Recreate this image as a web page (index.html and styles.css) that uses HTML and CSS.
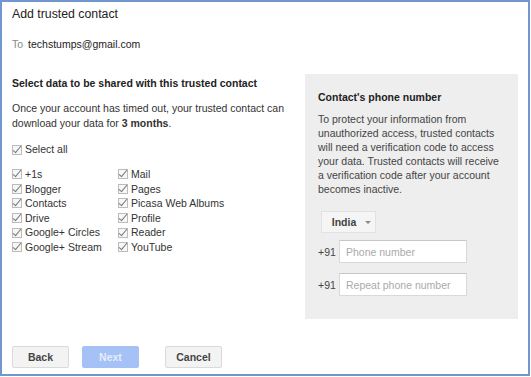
FILE: index.html
```html
<!DOCTYPE html>
<html lang="en">
<head>
  <meta charset="UTF-8" />
  <title>Add trusted contact</title>
  <link rel="stylesheet" href="styles.css">
</head>
<body>
  <div class="dialog">
    <h1 class="title">Add trusted contact</h1>
    <div class="to"><span class="to-label">To</span>techstumps@gmail.com</div>

    <div class="body">
      <div class="data">
        <h2 class="data-heading">Select data to be shared with this trusted contact</h2>
        <p class="data-text">Once your account has timed out, your trusted contact can download your data for <b>3 months</b>.</p>

        <label class="check select-all"><span class="box"></span>Select all</label>

        <div class="services">
          <label class="check"><span class="box"></span>+1s</label>
          <label class="check"><span class="box"></span>Mail</label>
          <label class="check"><span class="box"></span>Blogger</label>
          <label class="check"><span class="box"></span>Pages</label>
          <label class="check"><span class="box"></span>Contacts</label>
          <label class="check"><span class="box"></span>Picasa Web Albums</label>
          <label class="check"><span class="box"></span>Drive</label>
          <label class="check"><span class="box"></span>Profile</label>
          <label class="check"><span class="box"></span>Google+ Circles</label>
          <label class="check"><span class="box"></span>Reader</label>
          <label class="check"><span class="box"></span>Google+ Stream</label>
          <label class="check"><span class="box"></span>YouTube</label>
        </div>
      </div>

      <div class="phone-panel">
        <h2 class="panel-heading">Contact's phone number</h2>
        <p class="panel-text">To protect your information from unauthorized access, trusted contacts will need a verification code to access your data. Trusted contacts will receive a verification code after your account becomes inactive.</p>

        <div class="country">India <span class="arrow"></span></div>

        <div class="phone-row">
          <span class="prefix">+91</span>
          <input type="text" class="phone-input" placeholder="Phone number">
        </div>
        <div class="phone-row second">
          <span class="prefix">+91</span>
          <input type="text" class="phone-input" placeholder="Repeat phone number">
        </div>
      </div>
    </div>

    <div class="actions">
      <button type="button" class="btn">Back</button>
      <button type="button" class="btn btn-next">Next</button>
      <button type="button" class="btn btn-cancel">Cancel</button>
    </div>
  </div>
</body>
</html>
```

FILE: styles.css
```css
* {
  box-sizing: border-box;
}
body {
  margin: 0;
  font-family: "Liberation Sans", Arial, sans-serif;
  font-size: 10.5px;
  color: #222;
  background: #fff;
}
.dialog {
  width: 530px;
  height: 376px;
  border: 2px solid #7098cf;
  padding: 4px 10px 0;
}
.title {
  margin: 0;
  font-size: 12.3px;
  font-weight: normal;
  line-height: 16px;
  color: #222;
}
.to {
  margin-top: 14px;
  line-height: 16px;
}
.to-label {
  color: #888;
  margin-right: 5px;
}
.body {
  display: flex;
  align-items: flex-start;
  margin-top: 22px;
}
.data {
  width: 293px;
  padding-top: 2px;
}
.data-heading {
  margin: 0;
  font-size: 10.5px;
  line-height: 14px;
  font-weight: bold;
}
.data-text {
  margin: 11px 0 0;
  line-height: 15px;
  color: #333;
}
.check {
  display: flex;
  align-items: center;
  line-height: 14.6px;
  color: #333;
}
.box {
  position: relative;
  width: 10px;
  height: 10px;
  margin-right: 3px;
  border: 1px solid #bcbcbc;
  background: #f7f7f7;
}
/* the tick sticks out of the box a little */
.box::after {
  content: "";
  position: absolute;
  left: 2px;
  top: -2px;
  width: 3px;
  height: 8px;
  border-right: 1.5px solid #777;
  border-bottom: 1.5px solid #777;
  transform: rotate(40deg);
}
.select-all {
  margin-top: 11px;
  line-height: 15px;
}
.services {
  display: grid;
  grid-template-columns: 106px auto;
  margin-top: 10px;
}
.phone-panel {
  width: 213px;
  background: #eeeeee;
  padding: 16px 16px 23px 13px;
}
.panel-heading {
  margin: 0;
  font-size: 10.5px;
  line-height: 14px;
  font-weight: bold;
}
.panel-text {
  margin: 8px 0 0;
  line-height: 14px;
  color: #444;
}
.country {
  display: flex;
  align-items: center;
  justify-content: center;
  gap: 9px;
  width: 55px;
  height: 22px;
  margin: 15px 0 0 3px;
  padding-left: 6px;
  background: #f5f5f5;
  border: 1px solid #e2e2e2;
  font-weight: bold;
  color: #444;
}
.arrow {
  width: 0;
  height: 0;
  border-left: 3px solid transparent;
  border-right: 3px solid transparent;
  border-top: 3px solid #888;
}
.phone-row {
  display: flex;
  align-items: center;
  margin-top: 7px;
}
.phone-row.second {
  margin-top: 10px;
}
.prefix {
  width: 21px;
  color: #444;
}
.phone-input {
  width: 128px;
  height: 23px;
  padding: 0 6px;
  border: 1px solid #d9d9d9;
  border-top-color: #c6c6c6;
  background: #fff;
  font-family: "Liberation Sans", Arial, sans-serif;
  font-size: 10.5px;
  color: #222;
}
.phone-input::placeholder {
  color: #aaa;
}
.actions {
  display: flex;
  gap: 13px;
  margin-top: 27px;
}
.btn {
  width: 57px;
  height: 22px;
  background: #f3f3f3;
  border: 1px solid #dadada;
  border-radius: 2px;
  font-family: "Liberation Sans", Arial, sans-serif;
  font-size: 10.5px;
  font-weight: bold;
  color: #444;
  cursor: pointer;
}
.btn-next {
  background: #a5c1f6;
  border-color: #a5c1f6;
  color: #e4edfd;
}
.btn-cancel {
  margin-left: 13px;
}
```
